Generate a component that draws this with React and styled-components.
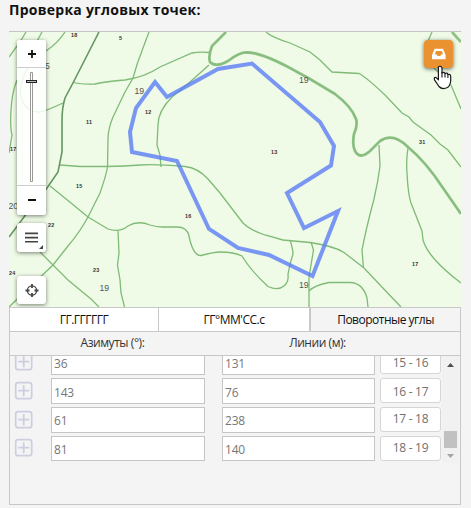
import React from "react";
import styled, { createGlobalStyle } from "styled-components";

const GlobalStyle = createGlobalStyle`
  * { box-sizing: border-box; }
  body {
    margin: 0;
    background: #f4f4f4;
    font-family: "Open Sans", "Noto Sans", sans-serif;
    overflow: hidden;
  }
`;

const Page = styled.main`
  width: 471px;
  height: 508px;
  padding: 0 10px 0 9px;
  display: flex;
  flex-direction: column;
`;

const Title = styled.h1`
  margin: 0;
  height: 31px;
  flex: none;
  font-size: 14px;
  line-height: 20px;
  font-weight: 700;
  letter-spacing: 0.25px;
  color: #111;
  white-space: nowrap;
`;

const MapPane = styled.section`
  position: relative;
  flex: none;
  width: 452px;
  height: 276px;
  border-top: 1px solid #c4c4c4;
  overflow: hidden;
`;

const MapCanvas = styled.svg`
  display: block;
  width: 452px;
  height: 275px;
  background: #effbe7;
`;

const Controls = styled.div`
  position: absolute;
  left: 8px;
  top: 8px;
  width: 29px;
`;

const Panel = styled.div`
  width: 29px;
  height: ${(p) => p.$h}px;
  margin-bottom: ${(p) => p.$gap || 0}px;
  border-radius: 3px;
  background: #fff;
  box-shadow: 0 1px 4px rgba(0, 0, 0, 0.5);
  display: flex;
  align-items: center;
  justify-content: center;
`;

const ZoomPanel = styled(Panel)`
  flex-direction: column;
  margin-bottom: 8px;
  background: rgba(255, 255, 255, 0.85);
`;

const ZoomButton = styled.button`
  width: 29px;
  height: ${(p) => p.$h}px;
  flex: none;
  padding: 0;
  border: 0;
  border-radius: 3px;
  background: #fff;
  display: flex;
  align-items: center;
  justify-content: center;
`;

const Track = styled.div`
  flex: 1;
  width: 29px;
  border-top: 1px solid #ccc;
  border-bottom: 1px solid #ccc;
  display: flex;
  justify-content: center;
`;

const OrangeButton = styled.button`
  position: absolute;
  left: 415px;
  top: 8px;
  width: 29px;
  height: 28px;
  padding: 0;
  border: 0;
  border-radius: 4px;
  background: #e9922f;
  box-shadow: 0 1px 4px rgba(0, 0, 0, 0.6);
  display: flex;
  align-items: center;
  justify-content: center;
`;

const Cursor = styled.svg`
  position: absolute;
  left: 424px;
  top: 33px;
`;

const Table = styled.section`
  width: 452px;
  height: 198px;
  flex: none;
  border: 1px solid #c8c8c8;
  display: flex;
  flex-direction: column;
`;

const Tabs = styled.div`
  display: grid;
  grid-template-columns: 149px 152px 1fr;
  height: 24px;
  border-bottom: 1px solid #c8c8c8;
`;

const Tab = styled.button`
  margin: 0;
  padding: 0 0 1px;
  border: 0;
  border-right: ${(p) => (p.$active ? "0" : p.$wide ? "2px" : "1px")} solid #c8c8c8;
  background: ${(p) => (p.$active ? "#f4f4f4" : "#fff")};
  font: 12px "Open Sans", sans-serif;
  letter-spacing: -0.5px;
  color: #111;
`;

const Head = styled.div`
  display: grid;
  grid-template-columns: 205px 205px;
  height: 24px;
  border-bottom: 1px solid #c8c8c8;
  font-size: 12px;
  line-height: 21px;
  letter-spacing: -0.45px;
  color: #333;
  text-align: center;
`;

const ScrollArea = styled.div`
  display: flex;
  justify-content: space-between;
  height: 107px;
  overflow: hidden;
  padding-right: 1px;
`;

const Rows = styled.div`
  margin-top: -7px;
  width: 431px;
`;

const Row = styled.div`
  display: grid;
  grid-template-columns: 41px 154px 17px 153px 5px 61px;
  height: 29px;
  align-items: start;
`;

const Field = styled.input`
  grid-column: ${(p) => p.$col};
  width: 100%;
  height: ${(p) => (p.$last ? 25 : 26)}px;
  margin: 0;
  padding: ${(p) => (p.$low ? 3 : 1)}px 2px 0;
  border: 1px solid #c6c6c6;
  border-radius: 0;
  background: #fff;
  font: 12px "Open Sans", sans-serif;
  letter-spacing: -0.2px;
  color: #777;
`;

const Segment = styled.button`
  grid-column: 6;
  height: 25px;
  padding: ${(p) => (p.$low ? "1px 0 0" : "0 0 2px")};
  border: 1px solid #d5d5d5;
  border-radius: 3px;
  background: #fff;
  font: 12px "Open Sans", sans-serif;
  letter-spacing: -0.3px;
  color: #707070;
`;

const AddIcon = styled.svg`
  margin: ${(p) => (p.$up ? 2 : 3)}px 0 0 4px;
`;

const Scrollbar = styled.div`
  width: 17px;
  height: 107px;
  background: #f1f1f1;
  display: flex;
  flex-direction: column;
  align-items: center;
`;

const Thumb = styled.div`
  width: 13px;
  height: 17px;
  margin-top: 58px;
  background: #c1c1c1;
`;

const thin = [
  "M26 32 20 42 9 57", "M42 32 36 43", "M65 32Q58 43 46 51",
  "M17 80Q12 92 11 110T12 135L9 153",
  "M28 67Q18 87 21 96Q24 112 40 112Q46 111 63 103",
  "M73 82Q78 84.5 95 84Q106 81.5 125 80Q145 77 160 67L192 53Q200 51.5 209 52.5",
  "M149 32 143 48Q137 63 133 78L125 92 113 117Q108 129 108 139L107.5 167Q106 176 100 193L88 217Q80 232 68 246L53 265 9 307",
  "M60 165 80 166.5H107Q125 166 140 165T185 166.5Q198 168 208 179L220 193 243 223Q250 230 265 235L283 240 310 242.5Q334 246 344 252.5L364 268 381 286 401 307",
  "M50 186Q70 202 88 217L108 229Q119 233 128 226Q138 220 150 225Q157 227 162 227H177Q187 227 189 236Q193 256 201 255.5Q214 252 220 252Q234 252 242 256Q251 271 268 286.5Q278 291 284 286Q289 282 288 274Q290 263 293 254Q293 249 290 240",
  "M40 252 53 265 68 280 91 299 99 307",
  "M118 231 119 253 117.5 265 120 280 121 293 124.5 307",
  "M311 242 313.5 250 309 277V307",
  "M309 291Q315 285 329 282.5H350Q363 283 367 298L368 307",
  "M209 65 190 82 172 97Q158 111 158 125L157 145 160 155 161 167",
  "M266 32Q271 37 290 43L310 52 320 60 332 72 359 73.5Q366 77 385 95L402 113 409 117 413 122 431 135 440 144 448 150 461 167",
  "M432 32 428 41 434 68 451 85 461 109",
  "M379 145 380 166Q378 182 374 199Q366 229 362 250L363.5 268",
  "M408 148Q406 160 407 173Q408 194 411 203L422 231 423 240Q428 258 461 283",
];

const mainRoad =
  "M226 32 212 46Q208 56 210 62Q216 68 228 61Q240 52 247 52.5Q260 52 290 68L310 79 335 94Q352 107 356 119Q358 125 354 134Q352 145 355 151Q360 160 370 151L380 141Q393 132 408 147Q426 162 443 188L461 214";

const labels = [
  [71, 36.5, 18], [119, 40, 5], [86, 124, 11], [145, 113.5, 12], [271, 154, 13],
  [419, 143.5, 31], [76, 188, 15], [185, 218, 16], [48, 226.5, 22], [93, 271.5, 23],
  [9, 275, 24], [412, 266, 17], [10, 151, 17],
];
const heights = [[134.5, 93.5, 19], [299, 83, 19], [99.5, 290.5, 19], [299, 288, 19], [8.5, 209, 20], [45, 69, 5]];

function ForestMap() {
  return (
    <MapCanvas viewBox="9 32 452 275">
      <g fill="none" stroke="#7fba76" strokeWidth="1.3">
        {thin.map((d) => <path key={d} d={d} />)}
      </g>
      <g fill="none" stroke="#8fc286" strokeWidth="2.8">
        <path d={mainRoad} />
        <path d="M452 32 461 42" />
      </g>
      <path d={mainRoad} fill="none" stroke="#82b87a" strokeWidth=".8" />
      <path d="M99 32 74 81 65 98Q62 108 62 120L62 152 58 172 47 188 27 213 9 237" fill="none" stroke="#659660" strokeWidth="1.6" />
      <g fill="#333" fontFamily="Liberation Sans, sans-serif" fontWeight="700" fontSize="5.4" letterSpacing=".2">
        {labels.map(([x, y, t]) => <text key={`${x}-${y}`} x={x} y={y}>{t}</text>)}
      </g>
      <g fill="#555" fontFamily="Liberation Sans, sans-serif" fontSize="8.7">
        {heights.map(([x, y, t]) => <text key={`${x}-${y}`} x={x} y={y}>{t}</text>)}
      </g>
      <path d="M155 82 167 97 218 69 252 63.5 320 122 334 146 331 165.5 287 193 304 228 338 211 312.5 276 269 255 238 248 209 229 177 161 132 152 130 132 136 108Z" fill="none" stroke="#577bf5" strokeOpacity=".78" strokeWidth="4" />
    </MapCanvas>
  );
}

function PlusIcon({ up }) {
  return (
    <AddIcon $up={up} width="20" height="20" viewBox="0 0 20 20" fill="none" stroke="#cdcee0">
      <rect x="1.7" y="1.7" width="16" height="16" rx="2.5" strokeWidth="1.7" />
      <path d="M9.7 4.2v11M4.2 9.7h11" strokeWidth="1.8" />
    </AddIcon>
  );
}

const rows = [
  ["36", "131", "15 - 16"],
  ["143", "76", "16 - 17"],
  ["61", "238", "17 - 18"],
  ["81", "140", "18 - 19"],
];

export default function App() {
  return (
    <Page>
      <GlobalStyle />
      <Title>Проверка угловых точек:</Title>
      <MapPane>
        <ForestMap />
        <Controls>
          <ZoomPanel $h={175}>
            <ZoomButton $h={27} aria-label="+">
              <svg width="10" height="10"><path d="M5 1v8M1 5h8" stroke="#111" strokeWidth="1.8" /></svg>
            </ZoomButton>
            <Track>
              <svg width="13" height="117">
                <path d="M5.5 4.5h2v109h-2z" fill="#fff" stroke="#999" />
                <rect x="1.5" y="12.5" width="10" height="2" fill="#bbb" stroke="#222" />
              </svg>
            </Track>
            <ZoomButton $h={29} aria-label="−">
              <svg width="10" height="10"><path d="M1 4h8" stroke="#111" strokeWidth="2" /></svg>
            </ZoomButton>
          </ZoomPanel>
          <Panel $h={29} $gap={24}>
            <svg width="29" height="29" stroke="#444" fill="none">
              <path d="M8 10.4h13M8 14.6h13M8 18.8h13" strokeWidth="1.6" />
              <path d="M26 22v4h-4z" fill="#444" stroke="none" />
            </svg>
          </Panel>
          <Panel $h={28}>
            <svg width="16" height="16" fill="none" stroke="#444">
              <circle cx="8" cy="8.5" r="4.6" strokeWidth="1.3" />
              <path d="M8 2v4M8 11v4M1.5 8.5h4M10.5 8.5h4" strokeWidth="1.8" />
            </svg>
          </Panel>
        </Controls>
        <OrangeButton aria-label="Импорт">
          <svg width="14" height="12" viewBox="0 0 14 12">
            <path fillRule="evenodd" fill="#fff" d="M2.6 .8h8.4L13.6 7v4.2H0V7zM4.1 3 2.7 6.2h1.8l1 1.8h2.8l1-1.8h1.8L9.7 3z" />
          </svg>
        </OrangeButton>
        <Cursor width="19" height="26" viewBox="0 0 19 26">
          <path d="M5.2 2.2Q7.2 0 9 2.8V8Q11 6.3 12 8.6Q14.2 7.2 14.8 9.5Q17.5 8.6 17.7 11.5V16Q17 21 14.5 22.5Q9 25 6 21.5L1.5 14.8Q.6 11.6 3.2 12.6L5.4 14.8V2.2Z" fill="#fff" stroke="#181818" strokeWidth="1.2" strokeLinejoin="round" />
          <path d="M9 7v5.5M12 8.5v4M14.9 9.5v3.5" stroke="#181818" strokeWidth="1.1" />
        </Cursor>
      </MapPane>
      <Table>
        <Tabs>
          <Tab>ГГ.ГГГГГГ</Tab>
          <Tab $wide>ГГ°ММ'СС.с</Tab>
          <Tab $active>Поворотные углы</Tab>
        </Tabs>
        <Head>
          <span>Азимуты (°):</span>
          <span>Линии (м):</span>
        </Head>
        <ScrollArea>
          <Rows>
            {rows.map(([azimuth, length, segment], i) => (
              <Row key={segment}>
                <PlusIcon up={i === 3} />
                <Field $col={2} $last={i === 3} $low={i < 2} defaultValue={azimuth} />
                <Field $col={4} $last={i === 3} $low={i < 2} defaultValue={length} />
                <Segment $low={i < 2}>{segment}</Segment>
              </Row>
            ))}
          </Rows>
          <Scrollbar>
            <svg width="17" height="17"><path d="M5 11h7L8.5 7z" fill="#505050" /></svg>
            <Thumb />
            <svg width="17" height="15"><path d="M5 6h7L8.5 10z" fill="#a3a3a3" /></svg>
          </Scrollbar>
        </ScrollArea>
      </Table>
    </Page>
  );
}
